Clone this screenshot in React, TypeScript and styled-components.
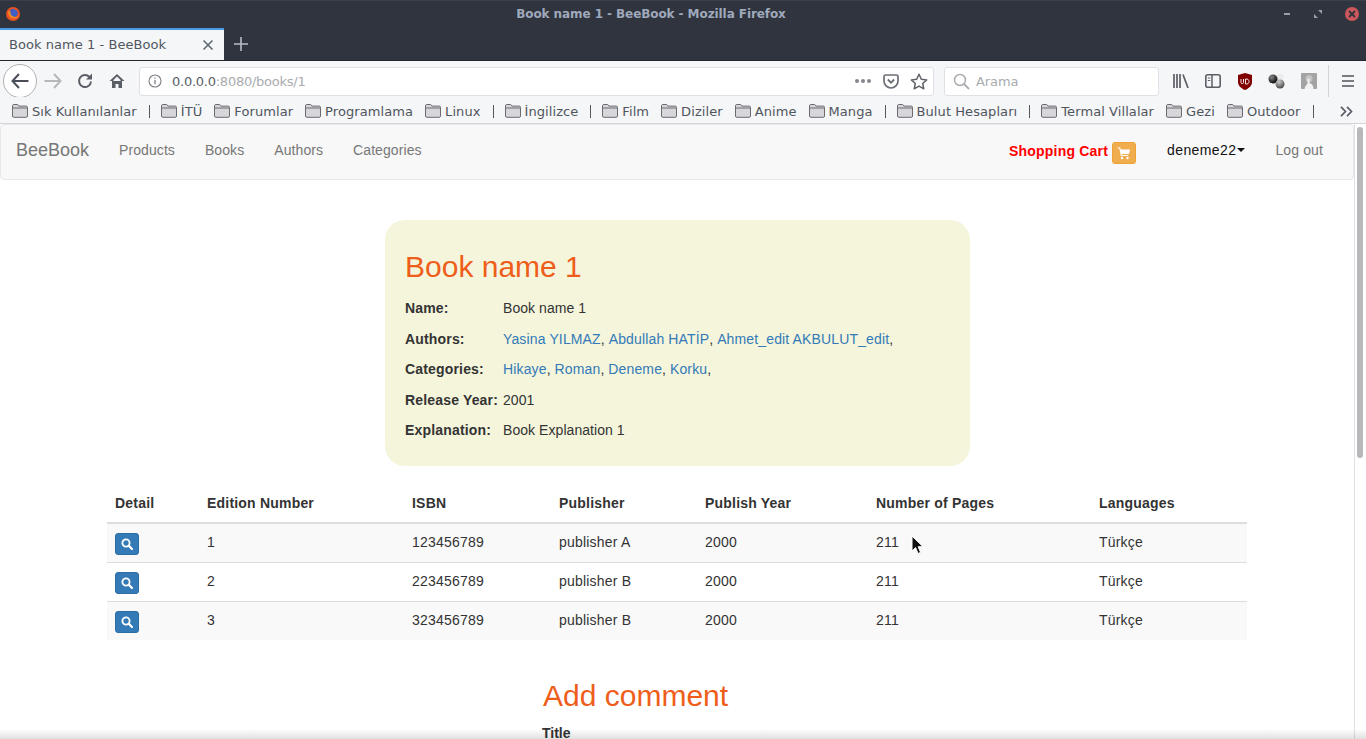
import React from 'react';
import styled, { createGlobalStyle } from 'styled-components';

const GlobalStyle = createGlobalStyle`
  html, body {
    margin: 0;
    padding: 0;
    height: 100%;
    overflow: hidden;
    background: #fff;
  }
  * { box-sizing: border-box; }
`;

const bookmarks: (string | null)[] = [
  'Sık Kullanılanlar', null, 'İTÜ', 'Forumlar', 'Programlama', 'Linux', null, 'İngilizce', null,
  'Film', 'Diziler', 'Anime', 'Manga', null, 'Bulut Hesapları', null, 'Termal Villalar', 'Gezi', 'Outdoor', null,
];

const editions = [
  { no: 1, isbn: '123456789', publisher: 'publisher A' },
  { no: 2, isbn: '223456789', publisher: 'publisher B' },
  { no: 3, isbn: '323456789', publisher: 'publisher B' },
];

const columnWidths = [92, 205, 147, 146, 171, 223, 156];

const Folder = () => (
  <FolderIcon viewBox="0 0 16 14">
    <path d="M.5 12V1.8C.5 1.1 1 .5 1.7.5h3.6c.5 0 .8.2 1 .6l.6 1h7.4c.7 0 1.2.5 1.2 1.2V12c0 .8-.5 1.3-1.2 1.3H1.7C1 13.300.5 12.800.5 12z" fill="#d7d7db" stroke="#6a6a70" />
    <path d="M.8 4h14.400" stroke="#6a6a70" fill="none" />
  </FolderIcon>
);

const MagnifierIcon = () => (
  <svg width="12" height="12" viewBox="0 0 12 12">
    <circle cx="5" cy="5" r="3.600" fill="none" stroke="#fff" strokeWidth="1.800" />
    <path d="M7.800 7.800 11 11" stroke="#fff" strokeWidth="2.200" strokeLinecap="round" />
  </svg>
);

const App: React.FC = () => {
  return (
    <>
      <GlobalStyle />
      <Screen>
        <TitleBar>
          <svg width="16" height="16" viewBox="0 0 16 16">
            <circle cx="8" cy="8" r="7" fill="#e8501f" />
            <circle cx="8.500" cy="7" r="4.300" fill="#3f5fc4" />
            <path d="M3 5c0 5 3 8 7 7.500 2-.4 3.500-1.800 4-3.500-1 1.500-3 2.200-5 1.800C6.500 10.300 5 8 5.500 5.500z" fill="#f08a24" />
            <path d="M9 1.500c1.500.5 3 1.500 3.500 3L10 4z" fill="#e8501f" />
          </svg>
          <WindowTitle>Book name 1 - BeeBook - Mozilla Firefox</WindowTitle>
          <WindowControls>
            <svg width="8" height="4" viewBox="0 0 8 4"><rect width="6" height="2" x="1" y="1" fill="#9a9ea6" /></svg>
            <svg width="8" height="8" viewBox="0 0 8 8">
              <path d="M4 0h4v4zM4 8H0V4z" fill="#9a9ea6" />
            </svg>
            <CloseCircle>
              <svg width="8" height="8" viewBox="0 0 8 8">
                <path d="M1 1l6 6M7 1 1 7" stroke="#2f333d" strokeWidth="1.800" />
              </svg>
            </CloseCircle>
          </WindowControls>
        </TitleBar>

        <TabStrip>
          <Tab>
            <TabLabel>Book name 1 - BeeBook</TabLabel>
            <svg width="12" height="12" viewBox="0 0 12 12">
              <path d="M1.500 1.500l9 9M10.500 1.500l-9 9" stroke="#5f6670" strokeWidth="1.500" />
            </svg>
          </Tab>
          <NewTab>
            <svg width="14" height="14" viewBox="0 0 14 14">
              <path d="M7 0v14M0 7h14" stroke="#b9bcc2" strokeWidth="1.600" />
            </svg>
          </NewTab>
        </TabStrip>

        <Toolbar>
          <BackButton>
            <svg width="18" height="16" viewBox="0 0 18 16">
              <path d="M8 1 1.500 8 8 15M2 8h15.500" fill="none" stroke="#4a4f57" strokeWidth="2" />
            </svg>
          </BackButton>
          <ToolButton>
            <svg width="18" height="16" viewBox="0 0 18 16">
              <path d="M10 1l6.500 7L10 15M16 8H.500" fill="none" stroke="#b5b7bb" strokeWidth="2" />
            </svg>
          </ToolButton>
          <ToolButton>
            <svg width="16" height="16" viewBox="0 0 16 16">
              <path d="M14 8.500A6 6 0 1 1 12.300 3.800" fill="none" stroke="#5a5e66" strokeWidth="2" />
              <path d="M15 .500v6h-6z" fill="#5a5e66" />
            </svg>
          </ToolButton>
          <ToolButton>
            <svg width="16" height="16" viewBox="0 0 16 16">
              <path d="M8 1 .500 8H3v7h3.500v-4h3v4H13V8h2.500z" fill="#5a5e66" />
              <path d="M8 3.500 4.500 7v1h7V7z" fill="#f5f6f7" />
            </svg>
          </ToolButton>
          <UrlBar>
            <svg width="14" height="14" viewBox="0 0 14 14">
              <circle cx="7" cy="7" r="6" fill="none" stroke="#7c7f85" strokeWidth="1.100" />
              <path d="M7 6v4.200M7 3.500v1.300" stroke="#7c7f85" strokeWidth="1.300" />
            </svg>
            <UrlText>0.0.0.0<UrlPath>:8080/books/1</UrlPath></UrlText>
            <Dots>
              <Dot /><Dot /><Dot />
            </Dots>
            <PocketIcon width="16" height="15" viewBox="0 0 16 15">
              <path d="M1 2.500C1 1.500 1.600 1 2.500 1h11c.9 0 1.500.5 1.500 1.500V7a7 7 0 0 1-14 0z" fill="none" stroke="#6b6e75" strokeWidth="1.700" />
              <path d="M4.800 5.500 8 8.700l3.200-3.200" fill="none" stroke="#6b6e75" strokeWidth="1.800" />
            </PocketIcon>
            <svg width="18" height="17" viewBox="0 0 18 17">
              <path d="M9 1.300l2.300 5 5.400.6-4 3.600 1.100 5.300L9 13.200l-4.800 2.600 1.100-5.300-4-3.600 5.400-.6z" fill="none" stroke="#5f6268" strokeWidth="1.500" strokeLinejoin="round" />
            </svg>
          </UrlBar>
          <SearchBar>
            <svg width="17" height="17" viewBox="0 0 17 17">
              <circle cx="7" cy="7" r="5.500" fill="none" stroke="#a9abaf" strokeWidth="1.500" />
              <path d="M11 11l5 5" stroke="#a9abaf" strokeWidth="1.800" />
            </svg>
            <SearchText>Arama</SearchText>
          </SearchBar>
          <ToolIcons>
            <ToolIcon>
              <svg width="16" height="14" viewBox="0 0 16 14">
                <path d="M1 0v14M4 0v14M7 0v14" stroke="#5b5f66" strokeWidth="1.700" />
                <path d="M10 .5 15 14" stroke="#5b5f66" strokeWidth="1.700" />
              </svg>
            </ToolIcon>
            <ToolIcon>
              <svg width="16" height="14" viewBox="0 0 16 14">
                <rect x=".8" y=".8" width="14.400" height="12.400" rx="2" fill="none" stroke="#5b5f66" strokeWidth="1.600" />
                <path d="M7 1v12" stroke="#5b5f66" strokeWidth="1.500" />
                <path d="M2.800 4h2.500M2.800 6.500h2.500" stroke="#5b5f66" strokeWidth="1" />
              </svg>
            </ToolIcon>
            <ToolIcon>
              <svg width="16" height="17" viewBox="0 0 16 17">
                <path d="M8 0 15 2v7c0 4-3.500 6.500-7 8-3.500-1.500-7-4-7-8V2z" fill="#800000" />
                <path d="M4 6v3.500c0 1.500 2.500 1.500 2.500 0V6M8.500 6v5c2.500.3 3.500-.8 3.500-2.500S11 5.800 8.500 6z" fill="none" stroke="#f0e8e8" strokeWidth="1" />
              </svg>
            </ToolIcon>
            <ToolIcon>
              <svg width="18" height="16" viewBox="0 0 18 16">
                <defs>
                  <radialGradient id="ballA" cx="35%" cy="30%" r="70%">
                    <stop offset="0" stopColor="#888" />
                    <stop offset="1" stopColor="#0c0c0c" />
                  </radialGradient>
                  <radialGradient id="ballB" cx="40%" cy="25%" r="75%">
                    <stop offset="0" stopColor="#ccc" />
                    <stop offset="1" stopColor="#4a4a4a" />
                  </radialGradient>
                </defs>
                <circle cx="12" cy="4" r="3.500" fill="#ececec" />
                <circle cx="5" cy="6" r="4.500" fill="url(#ballA)" />
                <circle cx="12" cy="11" r="4.500" fill="url(#ballB)" />
              </svg>
            </ToolIcon>
            <ToolIcon>
              <svg width="16" height="16" viewBox="0 0 16 16">
                <rect width="16" height="16" rx="1" fill="#a3a3a3" />
                <circle cx="8" cy="5.500" r="3.500" fill="#c4c4c4" />
                <path d="M3.500 16c.5-2.500 1.500-4 3-5V6.500c0-1.200 2-1.200 2 0V10c2.500.5 4 2.500 4 6z" fill="#f2f2f2" />
              </svg>
            </ToolIcon>
          </ToolIcons>
          <ToolDivider />
          <Hamburger>
            <svg width="14" height="12" viewBox="0 0 14 12">
              <path d="M1 1h12M1 6h12M1 11h12" stroke="#4f535a" strokeWidth="1.700" />
            </svg>
          </Hamburger>
        </Toolbar>

        <BookmarkBar>
          {bookmarks.map((item, i) =>
            item === null ? (
              <BookmarkSeparator key={i} />
            ) : (
              <Bookmark key={i}>
                <Folder />
                {item}
              </Bookmark>
            ),
          )}
          <Overflow>
            <svg width="13" height="11" viewBox="0 0 13 11">
              <path d="M1 .8 5.500 5.500 1 10.200M7 .8l4.500 4.700L7 10.200" fill="none" stroke="#5a5e66" strokeWidth="1.700" />
            </svg>
          </Overflow>
        </BookmarkBar>

        <Viewport>
          <Page>
            <Navbar>
              <Brand>BeeBook</Brand>
              <NavLink>Products</NavLink>
              <NavLink>Books</NavLink>
              <NavLink>Authors</NavLink>
              <NavLink>Categories</NavLink>
              <NavRight>
                <CartLink>Shopping Cart</CartLink>
                <CartBadge>
                  <svg width="14" height="13" viewBox="0 0 14 13">
                    <path d="M.5 1h2.300l1.500 7.500h7" fill="none" stroke="#fff" strokeWidth="1.200" />
                    <path d="M3.300 2.500H13l-1 4.500H4.200z" fill="#fff" />
                    <circle cx="5" cy="11" r="1.200" fill="#fff" />
                    <circle cx="10.500" cy="11" r="1.200" fill="#fff" />
                  </svg>
                </CartBadge>
                <UserMenu>deneme22<Caret /></UserMenu>
                <Logout>Log out</Logout>
              </NavRight>
            </Navbar>

            <BookCard>
              <BookTitle>Book name 1</BookTitle>
              <InfoRow>
                <InfoLabel>Name:</InfoLabel>
                <span>Book name 1</span>
              </InfoRow>
              <InfoRow>
                <InfoLabel>Authors:</InfoLabel>
                <span>
                  <Link>Yasina YILMAZ</Link>, <Link>Abdullah HATİP</Link>, <Link>Ahmet_edit AKBULUT_edit</Link>,
                </span>
              </InfoRow>
              <InfoRow>
                <InfoLabel>Categories:</InfoLabel>
                <span>
                  <Link>Hikaye</Link>, <Link>Roman</Link>, <Link>Deneme</Link>, <Link>Korku</Link>,
                </span>
              </InfoRow>
              <InfoRow>
                <InfoLabel>Release Year:</InfoLabel>
                <span>2001</span>
              </InfoRow>
              <InfoRow>
                <InfoLabel>Explanation:</InfoLabel>
                <span>Book Explanation 1</span>
              </InfoRow>
            </BookCard>

            <EditionTable>
              <colgroup>
                {columnWidths.map((w) => (
                  <Column key={w} $width={w} />
                ))}
              </colgroup>
              <thead>
                <tr>
                  <HeadCell>Detail</HeadCell>
                  <HeadCell>Edition Number</HeadCell>
                  <HeadCell>ISBN</HeadCell>
                  <HeadCell>Publisher</HeadCell>
                  <HeadCell>Publish Year</HeadCell>
                  <HeadCell>Number of Pages</HeadCell>
                  <HeadCell>Languages</HeadCell>
                </tr>
              </thead>
              <tbody>
                {editions.map((e) => (
                  <StripedRow key={e.no}>
                    <Cell>
                      <DetailButton>
                        <MagnifierIcon />
                      </DetailButton>
                    </Cell>
                    <Cell>{e.no}</Cell>
                    <Cell>{e.isbn}</Cell>
                    <Cell>{e.publisher}</Cell>
                    <Cell>2000</Cell>
                    <Cell>211</Cell>
                    <Cell>Türkçe</Cell>
                  </StripedRow>
                ))}
              </tbody>
            </EditionTable>

            <CommentForm>
              <CommentHeading>Add comment</CommentHeading>
              <FieldLabel>Title</FieldLabel>
            </CommentForm>

            <Cursor width="14" height="20" viewBox="0 0 14 20">
              <path d="M1 1v15l3.600-3.400L7 18.500l2.600-1.100-2.400-5.700H12z" fill="#111" stroke="#fff" strokeWidth="1" />
            </Cursor>
          </Page>
          <Scrollbar>
            <ScrollThumb />
          </Scrollbar>
          <BottomFade />
        </Viewport>
      </Screen>
    </>
  );
};

export default App;

// browser window
const Screen = styled.div`
  width: 1366px;
  height: 739px;
  display: flex;
  flex-direction: column;
  overflow: hidden;
`;

const TitleBar = styled.div`
  height: 28px;
  flex: none;
  padding: 0 0 2px 5px;
  display: flex;
  align-items: center;
  background: #2f343f;
  border-top: 1px solid #3a3f4a;
`;

const WindowTitle = styled.div`
  flex: 1;
  text-align: center;
  padding-right: 2px;
  font: bold 12px 'DejaVu Sans', sans-serif;
  letter-spacing: -0.08px;
  color: #9fa9bb;
`;

const WindowControls = styled.div`
  display: flex;
  align-items: center;
  gap: 23px;
  padding-right: 7px;
`;

const CloseCircle = styled.div`
  width: 14px;
  height: 14px;
  border-radius: 50%;
  background: #cc575d;
  display: flex;
  align-items: center;
  justify-content: center;
`;

const TabStrip = styled.div`
  height: 33px;
  flex: none;
  display: flex;
  background: #2f343f;
  border-bottom: 1px solid #23262e;
`;

const Tab = styled.div`
  width: 224px;
  height: 32px;
  padding: 0 10px 1px 9px;
  display: flex;
  align-items: center;
  justify-content: space-between;
  background: #f5f6f7;
  border-top: 2px solid #4c9be8;
`;

const TabLabel = styled.span`
  font: 13px 'DejaVu Sans', sans-serif;
  letter-spacing: 0.05px;
  color: #50565f;
`;

const NewTab = styled.div`
  width: 34px;
  display: flex;
  align-items: center;
  justify-content: center;
`;

const Toolbar = styled.div`
  height: 36px;
  flex: none;
  display: flex;
  align-items: center;
  padding: 4px 0 0 3px;
  background: #f5f6f7;
`;

const ToolButton = styled.div`
  width: 32px;
  height: 32px;
  flex: none;
  display: flex;
  align-items: center;
  justify-content: center;
`;

const BackButton = styled(ToolButton)`
  width: 34px;
  height: 34px;
  background: #fff;
  border: 1px solid #b1b1b3;
  border-radius: 50%;
`;

const UrlBar = styled.div`
  width: 795px;
  height: 29px;
  margin-left: 6px;
  padding: 0 5px 0 8px;
  flex: none;
  display: flex;
  align-items: center;
  gap: 7px;
  background: #fff;
  border: 1px solid #dfe1e6;
  border-radius: 3px;
`;

const UrlText = styled.span`
  flex: 1;
  margin-left: 3px;
  font: 13px 'DejaVu Sans', sans-serif;
  letter-spacing: -0.25px;
  color: #5a5e66;
`;

const UrlPath = styled.span`
  color: #a9abaf;
`;

const Dots = styled.div`
  display: flex;
  gap: 2px;
  margin-right: 5px;
`;

const Dot = styled.i`
  width: 4px;
  height: 4px;
  border-radius: 50%;
  background: #85878c;
`;

const PocketIcon = styled.svg`
  margin-right: 4px;
`;

const SearchBar = styled.div`
  width: 215px;
  height: 29px;
  margin-left: 10px;
  padding-left: 8px;
  flex: none;
  display: flex;
  align-items: center;
  gap: 6px;
  background: #fff;
  border: 1px solid #dfe1e6;
  border-radius: 3px;
`;

const SearchText = styled.span`
  font: 13px 'DejaVu Sans', sans-serif;
  letter-spacing: -0.1px;
  color: #a9abaf;
`;

const ToolIcons = styled.div`
  margin-left: 6px;
  display: flex;
`;

const ToolIcon = styled.div`
  width: 32px;
  height: 32px;
  display: flex;
  align-items: center;
  justify-content: center;
`;

const ToolDivider = styled.div`
  width: 1px;
  height: 33px;
  margin-left: 3px;
  background: #d4d5d8;
`;

const Hamburger = styled(ToolIcon)`
  margin-left: 3px;
`;

const BookmarkBar = styled.div`
  height: 27px;
  flex: none;
  padding: 2px 0 0 12px;
  display: flex;
  align-items: center;
  gap: 12px;
  background: #f5f6f7;
  border-bottom: 1px solid #d4d5d8;
`;

const Bookmark = styled.div`
  display: flex;
  align-items: center;
  gap: 4px;
  white-space: nowrap;
  font: 13px 'DejaVu Sans', sans-serif;
  letter-spacing: 0.08px;
  color: #50555d;
`;

const FolderIcon = styled.svg`
  width: 16px;
  height: 14px;
  flex: none;
`;

const BookmarkSeparator = styled.div`
  width: 1px;
  height: 13px;
  margin-right: -1px;
  background: #55585e;
`;

const Overflow = styled.div`
  margin-left: auto;
  padding-right: 13px;
  display: flex;
`;

// page content
const Viewport = styled.div`
  position: relative;
  flex: 1;
  min-height: 0;
  display: flex;
  background: #fff;
`;

const Page = styled.main`
  position: relative;
  width: 1354px;
  flex: none;
  overflow: hidden;
  font: 14px/20px 'Liberation Sans', Arial, sans-serif;
  color: #333;
`;

const Navbar = styled.nav`
  height: 56px;
  padding: 0 15px 4px;
  display: flex;
  align-items: center;
  background: #f8f8f8;
  border: 1px solid #e7e7e7;
  border-radius: 4px;
`;

const Brand = styled.a`
  margin-right: 30px;
  font-size: 18px;
  color: #777;
`;

const NavLink = styled.a`
  margin-right: 30px;
  letter-spacing: 0.08px;
  color: #777;
`;

const NavRight = styled.div`
  margin-left: auto;
  display: flex;
  align-items: center;
`;

const CartLink = styled.a`
  margin-top: 2px;
  font-weight: bold;
  letter-spacing: 0.2px;
  color: #f00;
`;

const CartBadge = styled.span`
  width: 24px;
  height: 22px;
  margin: 6px 0 0 4px;
  display: flex;
  align-items: center;
  justify-content: center;
  background: #f0ad4e;
  border: 1px solid #eea236;
  border-radius: 3px;
`;

const UserMenu = styled.a`
  margin-left: 31px;
  display: flex;
  align-items: center;
  letter-spacing: 0.4px;
  color: #111;
`;

const Caret = styled.i`
  margin-left: 1px;
  border-top: 4px solid #111;
  border-left: 4px solid transparent;
  border-right: 4px solid transparent;
`;

const Logout = styled.a`
  margin: 0 15px 0 30px;
  letter-spacing: 0.12px;
  color: #777;
`;

const BookCard = styled.section`
  width: 585px;
  height: 246px;
  margin: 40px auto 0 385px;
  padding: 28px 20px 0;
  background: #f5f5dc;
  border-radius: 20px;
`;

const BookTitle = styled.h1`
  margin: 0 0 7px;
  font-size: 30px;
  font-weight: 400;
  line-height: 38px;
  color: #ee5e1a;
`;

const InfoRow = styled.div`
  height: 30.500px;
  display: flex;
  align-items: center;
  letter-spacing: 0.06px;
  color: #333;
`;

const InfoLabel = styled.b`
  width: 98px;
  flex: none;
  white-space: nowrap;
  letter-spacing: 0.17px;
`;

const Link = styled.a`
  letter-spacing: 0.14px;
  color: #337ab7;
`;

const EditionTable = styled.table`
  width: 1140px;
  margin: 18px 0 0 107px;
  table-layout: fixed;
  border-collapse: collapse;
  letter-spacing: 0.2px;
`;

const Column = styled.col<{ $width: number }>`
  width: ${(p) => p.$width}px;
`;

const HeadCell = styled.th`
  height: 39px;
  padding: 8px;
  text-align: left;
  font-weight: bold;
  border-bottom: 2px solid #ddd;
`;

const Cell = styled.td`
  height: 39px;
  padding: 0 8px 2px;
  border-top: 1px solid #ddd;
`;

const StripedRow = styled.tr`
  background: #f9f9f9;
  &:nth-child(even) {
    background: #fff;
  }
`;

const DetailButton = styled.span`
  width: 24px;
  height: 22px;
  margin-top: 5px;
  display: flex;
  align-items: center;
  justify-content: center;
  background: #337ab7;
  border: 1px solid #2e6da4;
  border-radius: 3px;
`;

const CommentForm = styled.section`
  width: 270px;
  margin: 37px 0 0 542px;
`;

const CommentHeading = styled.h2`
  margin: 0 0 8px;
  padding-left: 1px;
  font-size: 30px;
  font-weight: 400;
  line-height: 38px;
  color: #ee5e1a;
`;

const FieldLabel = styled.label`
  display: block;
  font-weight: bold;
`;

const Cursor = styled.svg`
  position: absolute;
  left: 911px;
  top: 411px;
`;

const Scrollbar = styled.div`
  width: 12px;
  flex: none;
  padding: 3px 3px 0 2px;
  background: #fff;
  border-left: 1px solid #e0e0e6;
`;

const ScrollThumb = styled.div`
  height: 331px;
  background: #b8b8bb;
  border-radius: 3px;
`;

const BottomFade = styled.div`
  position: absolute;
  left: 0;
  right: 0;
  bottom: 0;
  height: 10px;
  background: linear-gradient(to bottom, rgba(0, 0, 0, 0), rgba(0, 0, 0, 0.12));
  pointer-events: none;
`;
